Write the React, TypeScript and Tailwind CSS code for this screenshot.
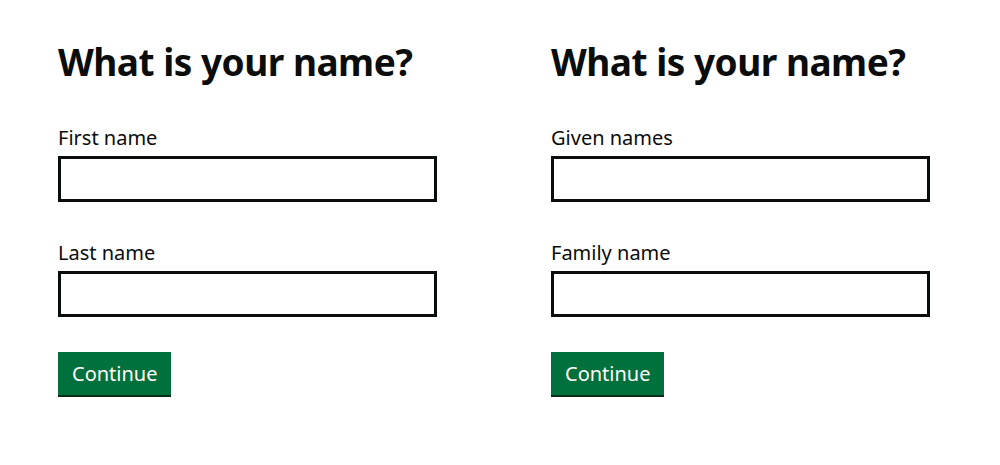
const font = { fontFamily: '"Noto Sans", "Liberation Sans", Arial, sans-serif' };

interface NameFormProps {
  first: string;
  second: string;
}

function NameForm({ first, second }: NameFormProps) {
  return (
    <div className="w-[379px] text-[#0b0c0c]">
      <h1 className="text-[37px] font-bold leading-[1.2] tracking-[-0.5px] mt-[40px]">What is your name?</h1>

      <label className="block text-[20px] leading-[25px] mt-[41px]">{first}</label>
      <input className="block mt-[6px] h-[46px] w-full border-[3px] border-[#0b0c0c] bg-white" />

      <label className="block text-[20px] leading-[25px] mt-[38px]">{second}</label>
      <input className="block mt-[6px] h-[46px] w-full border-[3px] border-[#0b0c0c] bg-white" />

      <button className="mt-[35px] h-[43px] px-[14px] bg-[#00703c] text-white text-[20px] shadow-[0_2px_0_#002d18]">
        Continue
      </button>
    </div>
  );
}

export default function App() {
  return (
    <div className="w-[1000px] h-[465px] bg-white flex gap-[114px] pl-[58px]" style={font}>
      <NameForm first="First name" second="Last name" />
      <NameForm first="Given names" second="Family name" />
    </div>
  );
}
